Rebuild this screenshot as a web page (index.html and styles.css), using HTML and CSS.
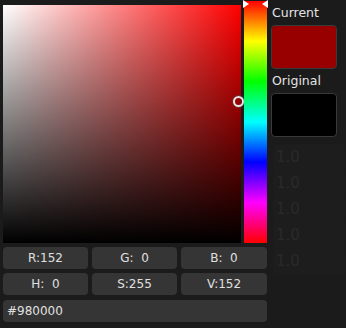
FILE: index.html
```html
<!doctype html>
<html>
    <head>
        <meta charset="utf-8"/>
        <title>color-picker</title>
        <link rel="stylesheet" href="styles.css">
    </head>
    <body>
        <div class="picker">
            <div class="top">
                <div class="sv">
                    <div class="sv-white"></div>
                    <div class="sv-black"></div>
                    <span class="sv-knob"></span>
                </div>
                <div class="hue">
                    <span class="arrow arrow-l"></span>
                    <span class="arrow arrow-r"></span>
                </div>
                <div class="side">
                    <p class="label">Current</p>
                    <div class="swatch current"></div>
                    <p class="label">Original</p>
                    <div class="swatch original"></div>
                    <ul class="ghost">
                        <li>1.0</li>
                        <li>1.0</li>
                        <li>1.0</li>
                        <li>1.0</li>
                        <li>1.0</li>
                    </ul>
                </div>
            </div>
            <div class="fields">
                <div class="field">R:152</div>
                <div class="field">G:  0</div>
                <div class="field">B:  0</div>
                <div class="field">H:  0</div>
                <div class="field">S:255</div>
                <div class="field">V:152</div>
                <div class="field hex">#980000</div>
            </div>
        </div>
    </body>
</html>
```

FILE: styles.css
```css
* {
    margin: 0;
    padding: 0;
    box-sizing: border-box;
}
body {
    width: 346px;
    height: 328px;
    overflow: hidden;
    background-color: #1b1b1b;
    color: #dcdcdc;
    font-family: "DejaVu Sans", sans-serif;
    font-size: 12px;
}
.picker {
    padding: 1px 0 0 3px;
}
.top {
    display: flex;
    flex-direction: row;
    align-items: flex-start;
    height: 242px;
}
.sv {
    position: relative;
    width: 238px;
    height: 238px;
    margin-top: 4px;
    background-color: #ff0000;
}
.sv-white {
    position: absolute;
    inset: 0;
    background: linear-gradient(to right, #fff, rgba(255, 255, 255, 0));
}
.sv-black {
    position: absolute;
    inset: 0;
    background: linear-gradient(to bottom, rgba(0, 0, 0, 0), #000);
}
.sv-knob {
    position: absolute;
    left: 230px;
    top: 91px;
    width: 11px;
    height: 11px;
    border-radius: 50%;
    border: 2px solid #e8e8e8;
    box-shadow: 0 0 0 1px rgba(80, 80, 80, 0.6);
}
.hue {
    position: relative;
    width: 23px;
    height: 242px;
    margin-left: 3px;
    background: linear-gradient(to bottom,
        #ff0000 0%, #ffff00 16.6%, #00ff00 33.3%, #00ffff 50%,
        #0000ff 66.6%, #ff00ff 83.3%, #ff0000 100%);
}
.arrow {
    position: absolute;
    top: -1px;
    width: 0;
    height: 0;
    border-top: 4px solid transparent;
    border-bottom: 4px solid transparent;
}
.arrow-l {
    left: -1px;
    border-left: 6px solid #fff;
}
.arrow-r {
    right: -1px;
    border-right: 6px solid #fff;
}
.side {
    width: 66px;
    margin-left: 4px;
    display: flex;
    flex-direction: column;
}
.label {
    height: 24px;
    line-height: 24px;
    font-size: 12.5px;
    color: #e4e4e4;
    padding-left: 1px;
}
.swatch {
    height: 44px;
    border: 1px solid #3a3a3a;
    border-radius: 4px;
}
.current {
    background-color: #980000;
}
.original {
    background-color: #000;
}
.ghost {
    list-style: none;
    margin-top: 7px;
    margin-left: 2px;
    width: 72px;
}
.ghost li {
    height: 26px;
    line-height: 26px;
    padding-left: 3px;
    font-size: 15px;
    color: #2a2a2a;
    border-radius: 4px;
    background-color: #1d1d1d;
}
.fields {
    display: grid;
    grid-template-columns: 85px 85px 86px;
    column-gap: 4px;
    row-gap: 4px;
    width: 264px;
    margin-top: 4px;
}
.field {
    height: 22px;
    line-height: 22px;
    text-align: center;
    white-space: pre;
    background-color: #353535;
    border-radius: 4px;
    color: #e0e0e0;
}
.hex {
    grid-column: 1 / 4;
    text-align: left;
    padding-left: 4px;
    margin-top: 1px;
}
```
